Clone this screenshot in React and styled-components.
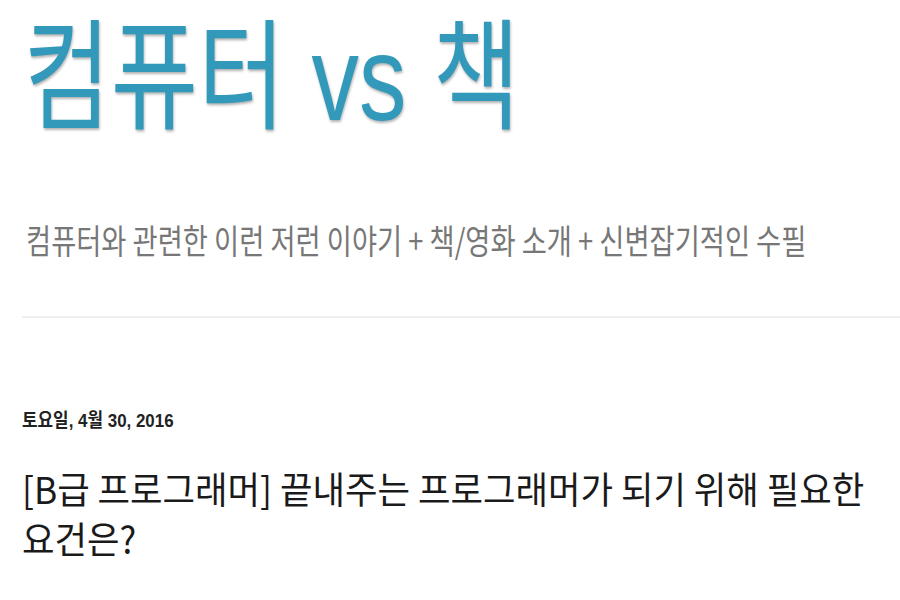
import React from "react";
import styled, { createGlobalStyle, css } from "styled-components";

const GlobalStyle = createGlobalStyle`
  html, body {
    margin: 0;
    padding: 0;
    background: #fff;
  }
  body {
    font-family: "Noto Sans CJK KR", sans-serif;
    overflow: hidden;
  }
`;

// the reference is rendered with narrow glyphs, so each text block is squeezed horizontally
const squeeze = (sx) => css`
  width: ${100 / sx}%;
  transform: scaleX(${sx});
  transform-origin: left top;
`;

const Page = styled.div`
  width: 900px;
  height: 600px;
  overflow: hidden;
  padding-left: 22px;
  box-sizing: border-box;
`;

const Header = styled.header`
  border-bottom: 2px solid #eeeeee;
  padding-bottom: 55px;
`;

const Title = styled.h1`
  margin: 0;
  padding-top: 18px;
  padding-left: 2px;
  font-family: "Liberation Sans", "Noto Sans CJK KR", sans-serif;
  font-weight: 400;
  font-size: 120px;
  line-height: 1;
  color: #3399bb;
  text-shadow: 1px 2px 3px rgba(0, 0, 0, 0.3);
  white-space: nowrap;
  ${squeeze(0.79)}
`;

const Tagline = styled.p`
  margin: 82px 0 0;
  padding-left: 5px;
  font-size: 34px;
  line-height: 1.2;
  color: #777777;
  white-space: nowrap;
  ${squeeze(0.803)}
`;

const Post = styled.article`
  padding-top: 92px;
`;

const PostDate = styled.h2`
  margin: 0;
  font-family: "Liberation Sans", "Noto Sans CJK KR", sans-serif;
  font-weight: 700;
  font-size: 19px;
  line-height: 1.2;
  color: #222222;
  ${squeeze(0.89)}
`;

const PostTitle = styled.h3`
  margin: 30px 0 0;
  font-weight: 400;
  font-size: 37px;
  line-height: 50px;
  color: #1a1a1a;
  ${squeeze(0.955)}
`;

export default function App() {
  return (
    <Page>
      <GlobalStyle />
      <Header>
        <Title>컴퓨터 vs 책</Title>
        <Tagline>컴퓨터와 관련한 이런 저런 이야기 + 책/영화 소개 + 신변잡기적인 수필</Tagline>
      </Header>
      <Post>
        <PostDate>토요일, 4월 30, 2016</PostDate>
        <PostTitle>[B급 프로그래머] 끝내주는 프로그래머가 되기 위해 필요한 요건은?</PostTitle>
      </Post>
    </Page>
  );
}
